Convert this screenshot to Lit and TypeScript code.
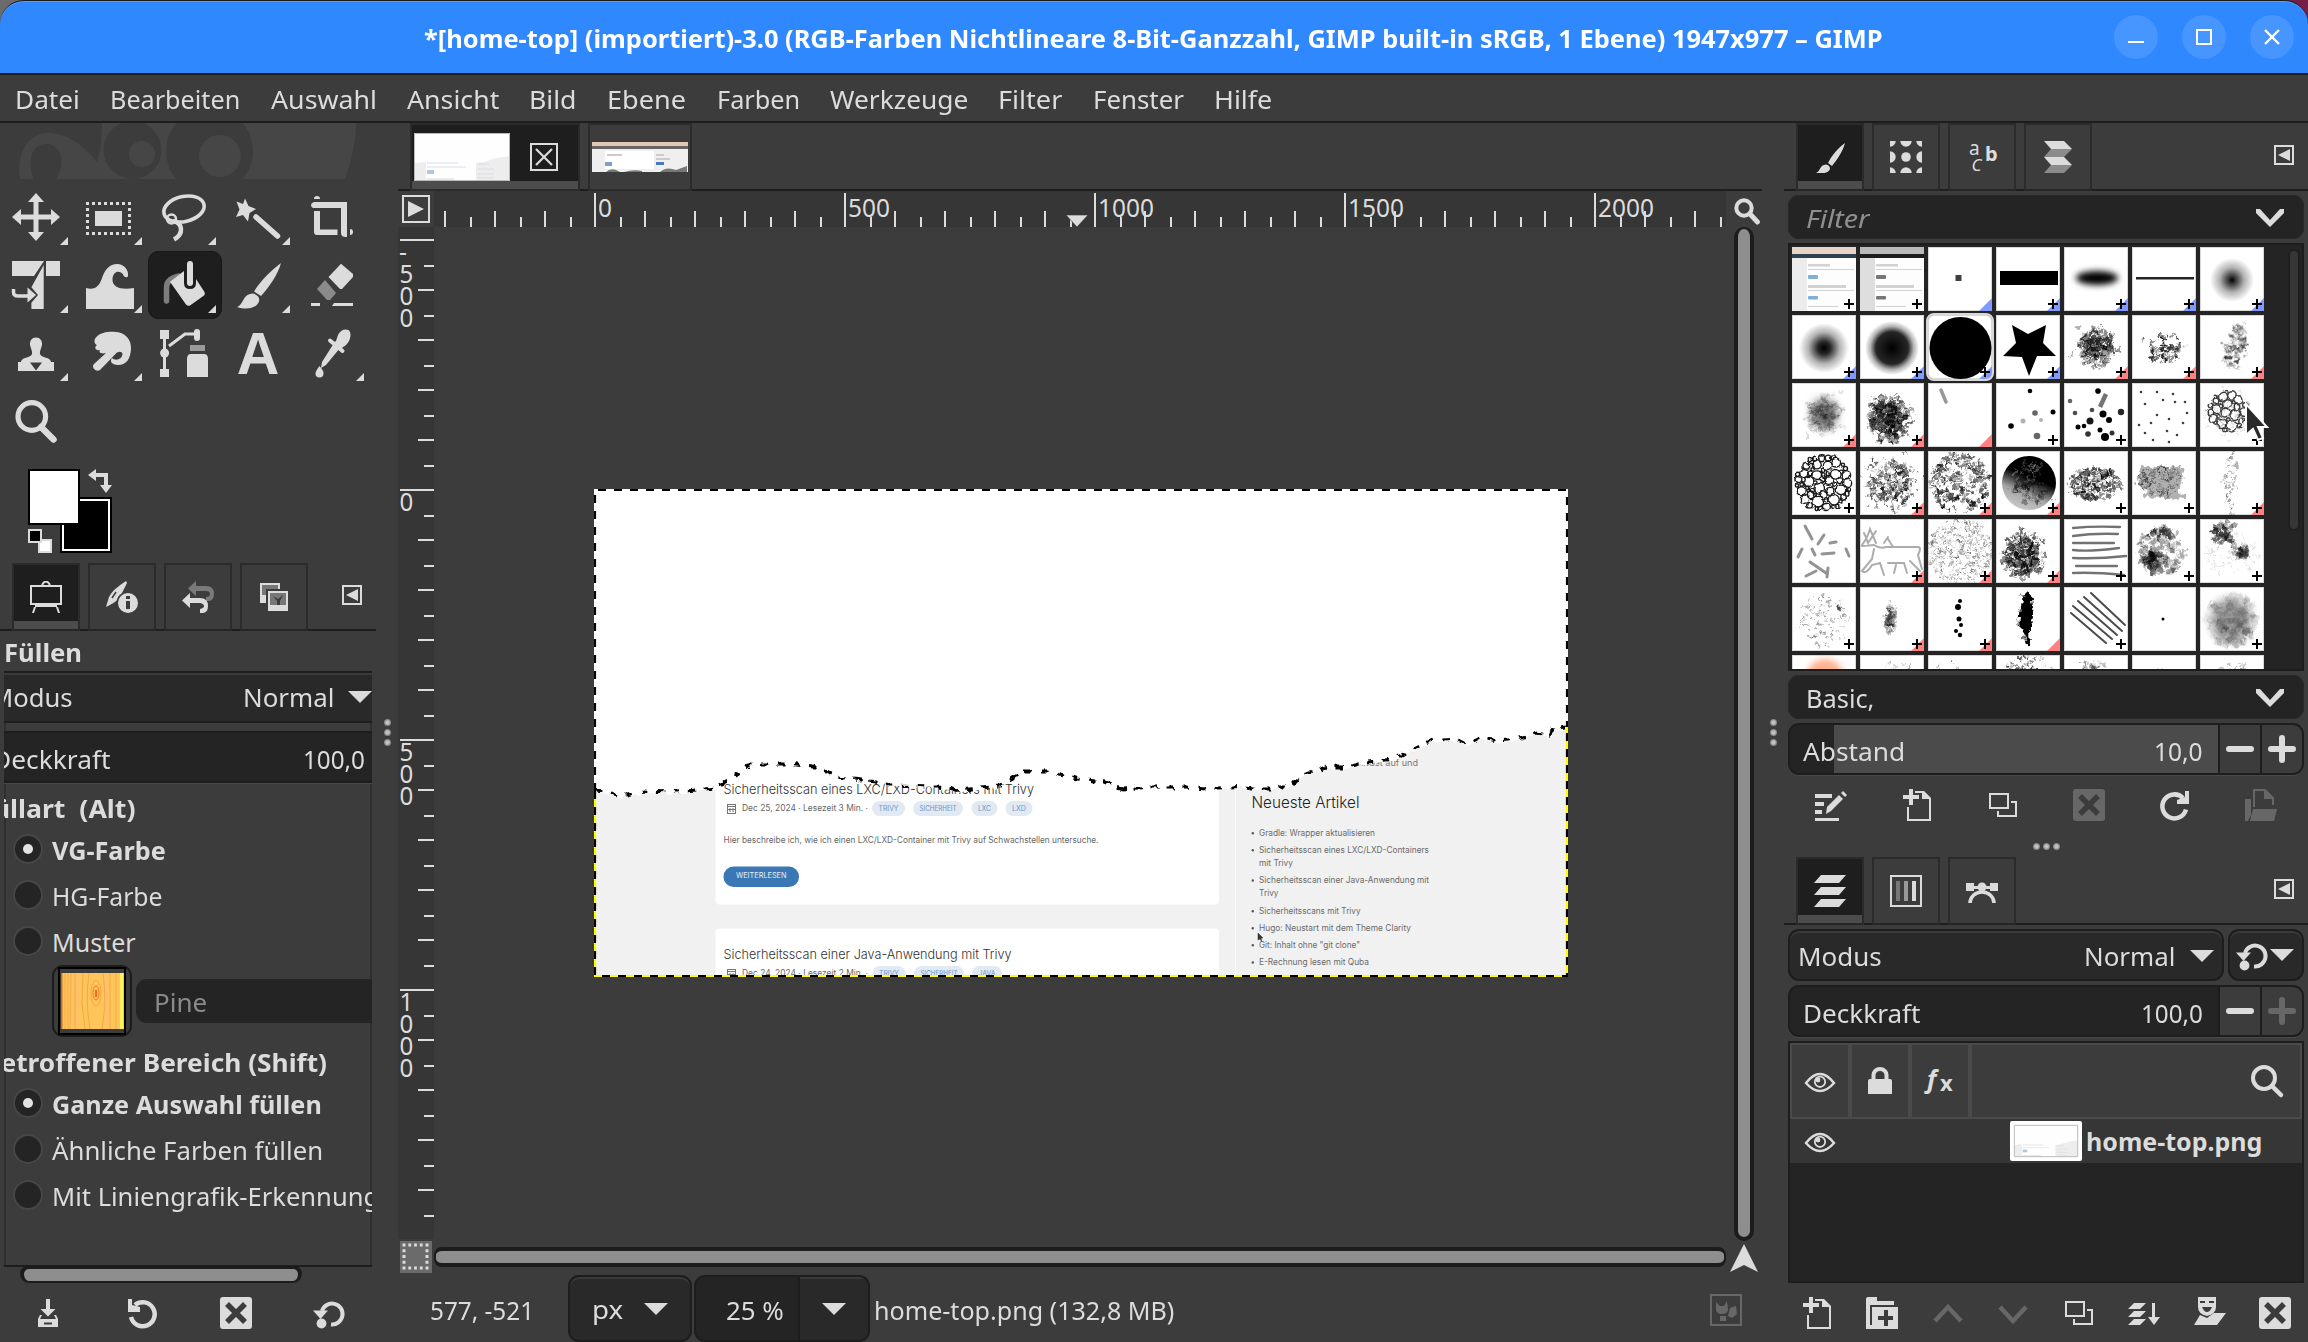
import { LitElement, html, css, svg, nothing } from "lit";
import { customElement, property } from "lit/decorators.js";
import { classMap } from "lit/directives/class-map.js";
import { styleMap } from "lit/directives/style-map.js";

const L = "#dcdcdc";

/* Text squeezed or stretched to a known advance width. */
@customElement("fit-text")
class FitText extends LitElement {
  @property() text = "";
  @property({ type: Number }) w = 0;
  static styles = css`
    :host { display: inline-block; white-space: pre; flex: none; }
    .box { display: block; }
    .in { display: inline-block; transform-origin: 0 50%; white-space: pre; }
  `;
  render() {
    return html`<span class="box" style=${styleMap({ width: this.w + "px" })}><span class="in">${this.text}</span></span>`;
  }
  updated() {
    const el = this.renderRoot.querySelector(".in") as HTMLElement;
    const n = el.offsetWidth;
    if (n > 0) el.style.transform = `scaleX(${this.w / n})`;
  }
}

const T = (text: string, w: number, cls = "") => html`<fit-text class=${cls} .text=${text} .w=${w}></fit-text>`;

const ic = (w: number, h: number, body: unknown, cls = "") =>
  html`<svg class="ic ${cls}" width=${w} height=${h} viewBox="0 0 ${w} ${h}" fill=${L}>${body}</svg>`;

/* ---------- toolbox ---------- */
const tools: { body: unknown; more?: boolean; on?: boolean }[] = [
  { more: true, body: svg`<path d="M24 0L32 9H26.5V21.5H39V16L48 24L39 32V26.5H26.5V39H32L24 48L16 39H21.5V26.5H9V32L0 24L9 16V21.5H21.5V9H16Z"/>` },
  { more: true, body: svg`<rect x="1.5" y="10.5" width="42" height="30" fill="none" stroke=${L} stroke-width="3" stroke-dasharray="3 3" stroke-dashoffset="1.5"/><rect x="9" y="18" width="27" height="15"/>` },
  { more: true, body: svg`<g fill="none" stroke=${L} stroke-width="3.600"><ellipse cx="24" cy="16" rx="20.5" ry="12.5" transform="rotate(-13 24 16)"/><circle cx="11.5" cy="26" r="4.5" stroke-width="2.500"/><path d="M13 28C23 30 24 41 14 46.500" stroke-width="4.5"/></g>` },
  { more: true, body: svg`<path d="M11 5.500L14.500 13L22 16L15.500 20L14 28.500L9 22L2 24L5.500 16.500L2.500 8.500L9 11Z"/><path d="M22 24L43.500 43" stroke=${L} stroke-width="5.5" stroke-linecap="round"/>` },
  { body: svg`<path d="M6 9H39V44H38Q33 44 33 40V15H5Q3 14 3 12T6 9ZM6 18H12V36.500H29.500V42H9Q6 42 6 39ZM6 6Q6 3 9 3T12 6ZM42 36Q45 36 45 39T42 42Z"/>` },
  { more: true, body: svg`<path d="M0 0H32L22 15H0ZM34 0H48V15H34ZM31.700 4V48H19.400V41.700L26 34L19.400 26.300Z"/><path d="M1.500 28V31Q1.500 35 6 35H16" fill="none" stroke=${L} stroke-width="3.5"/><path d="M15.500 26.500L24 34L15.500 41.500Z"/>` },
  { more: true, body: svg`<path d="M0 48V27C9 30 14 24 16 17C19 8 24 3 31 3C38 3 43 9 42 15.500C40 17 38 16 37 13.500C34 9 27 10 26.500 18C26 27 36 29 48 27V48Z"/>` },
  { more: true, on: true, body: svg`<path d="M6.500 40V26Q6.500 18 19 15" fill="none" stroke="#7d7d7d" stroke-width="5.5" stroke-linecap="round"/><path d="M10 20.700L24 10V22Q24 28 30 28T36 22V18L44.500 31Q45.500 33 44 34.500L30 44.500Q28 45.500 26 43.500Z"/><rect x="27" y="0" width="6" height="25" rx="3"/>` },
  { more: true, body: svg`<path d="M47 2C44 13 36 25 27 35L20 30.500C27 19 38 9 47 2ZM19 32.500C24 34 26 37 25 40.500C22 48 12 49 3 46C10 44 8 33 19 32.500Z"/>` },
  { body: svg`<path d="M33 2.700L45 13V16L34 28H32L20.500 16Z"/><path d="M17 19L28 32L22 39H19L9 28Z" fill="#8b8b8b"/><path d="M3 42H12V45H3ZM26 42H45V45H24Z"/>` },
  { more: true, body: svg`<path d="M24 8.500C28 8.500 30.500 12 30 16C29 20 27.500 22 28 25C29 29 39 28 39 33H42V42H6V33H9C9 28 19 29 20 25C20.500 22 19 20 18 16C17.500 12 20 8.500 24 8.500Z"/><path d="M18 33.500H30L24 41.500Z" fill="#3c3c3c"/>` },
  { more: true, body: svg`<path d="M9.500 9C14 3 22 2.500 28 2.700C40 3 45.500 11 45 20C44.500 29 41 36 32 36C25.500 36 23.500 32 26 29C29 32 36 31 36.500 25C36 22 32 22 29.500 25L14 41Q11 43 8 40Q6 37 8 35L20 24C16 25 12 24 14 21C9 22 8 18 11 16C8 15 8 11 9.500 9Z"/>` },
  { body: svg`<path d="M0 1H9V10H6V40H9V48H0V40H3V10H0Z"/><circle cx="4.600" cy="24" r="4.500"/><path d="M9 17L25 5H35" fill="none" stroke=${L} stroke-width="3"/><rect x="34" y="0" width="6" height="12" rx="3"/><path d="M30 16H45V22H30Z" fill="#9a9a9a"/><path d="M27 30Q27 25 31 25H44Q48 25 48 30V48H27Z"/>` },
  { body: svg`<text x="24" y="44.500" text-anchor="middle" font-family="Liberation Sans" font-weight="700" font-size="59">A</text>` },
  { more: true, body: svg`<path d="M30 6C33 0 40 -1 42 3C44 8 40 16 35 18L33 20L25 14L28 12Z"/><path d="M22 11.500L34.500 22" stroke=${L} stroke-width="4" stroke-linecap="round"/><path d="M26 14L32 19L18 36L13 39L14 33Z"/><path d="M11.500 37Q16 42 15.500 44.500A4 4 0 0 1 7.500 44.500Q7.500 42 11.500 37Z"/>` },
  { body: svg`<circle cx="19.800" cy="19.500" r="13.800" fill="none" stroke=${L} stroke-width="5.200"/><path d="M29 30L41.500 42.500" stroke=${L} stroke-width="6.500" stroke-linecap="round"/>` },
];

/* ---------- small icons ---------- */
const iEasel = svg`<rect x="1" y="5" width="30" height="18" fill="none" stroke=${L} stroke-width="2"/><path d="M12 4Q16 -3 20 4" fill="none" stroke=${L} stroke-width="2"/><path d="M5 24H27V26H5ZM4 26H6L4 32H2ZM26 26H28L30 32H28Z"/>`;
const iDevice = svg`<path d="M20 0L21 2L13 18Q8 22 2 25L0 26L3 16Q6 9 20 0Z"/><path d="M6 17L10 11" stroke="#3c3c3c" stroke-width="1.500"/><circle cx="22" cy="22" r="11.500" fill="#3c3c3c"/><circle cx="22" cy="22" r="10"/><path d="M20 15H24V18H20ZM20 20H24V28H20Z" fill="#3c3c3c"/>`;
const iHistory = svg`<path d="M6 7.500L14 0V5H24Q32 5 32 13T24 20V16Q28 16 28 13T24 10H14V15Z" fill="#7a7a7a"/><path d="M0 19.500L8 12V17H18Q26 17 26 25T18 32V28Q22 27 22 25T18 22H8V27Z"/>`;
const iImages = svg`<path d="M2 2H22V8H20V4H4V14H8V22H2Z"/><path d="M4 4H20V8H8V14H4Z" fill="#777"/><path d="M10 10H30V30H10Z"/><path d="M12 12H28V24H12Z" fill="#777"/><path d="M19 24V20L15 15L20 18L25 14L22 20V24Z" fill="#3c3c3c"/>`;
const iBrush = svg`<path d="M31 2C29 10 23 19 18 25L14 22C18 14 25 6 31 2ZM12 23.500Q16 24 16 28C14 33 7 32.500 2 32C7 30 5 24 12 23.500Z"/>`;
const iPattern = svg`<g>${[0, 16, 32].map((y) => [0, 16, 32].map((x) => svg`<circle cx=${x} cy=${y} r=${x === 16 && y === 16 ? 4.800 : 5.700}/>`))}</g>`;
const iFont = svg`<g font-family="Noto Sans"><text x="3" y="13.500" font-size="19">a</text><text x="19" y="20" font-size="20" font-weight="700">b</text><text x="5.500" y="30" font-size="17" font-style="italic">C</text></g>`;
const iDocs = svg`<path d="M2 0H22L30 8H9ZM2 16H22L30 24H9Z"/><path d="M9 8H30L22 16H2ZM9 24H30L22 32H2Z" fill="#8b8b8b"/>`;
const iLayers = svg`<path d="M7 0H32L25 8H0ZM7 12H32L25 20H0ZM7 24H32L25 32H0Z"/>`;
const iChannels = svg`<rect x="1" y="1" width="30" height="30" fill="none" stroke=${L} stroke-width="2"/><path d="M6 6H10V26H6Z" fill="#777"/><path d="M14 6H18V26H14Z" fill="#999"/><path d="M22 6H26V26H22Z"/>`;
const iPaths = svg`<path d="M0 8H8V11H24V8H32V16H24V14H8V16H0Z"/><circle cx="16" cy="12" r="4.500"/><path d="M4 28A12 11 0 0 1 28 28" fill="none" stroke=${L} stroke-width="3.500"/>`;
const iSave = svg`<path d="M14 2H18V12H23.500L16 19.500L8.500 12H14ZM8 18L6 22V30H26V22L24 18H22L24 22H8L10 18Z"/><path d="M12 25.500H20V27.500H12Z" fill="#3c3c3c"/>`;
const iRevert = svg`<path d="M5 20A12 12 0 1 0 9 8" fill="none" stroke=${L} stroke-width="4.500"/><path d="M2 2H6V8L14 10V15H2Z"/>`;
const iDelete = svg`<rect width="32" height="32" rx="3"/><path d="M7 7L25 25M25 7L7 25" stroke="#3c3c3c" stroke-width="5.500"/>`;
const iReset = svg`<path d="M8 14A10.500 10.500 0 1 1 17 27.500" fill="none" stroke=${L} stroke-width="4"/><path d="M-1 13.500H14L6.500 22Z"/><circle cx="7.500" cy="26.500" r="4.900"/>`;
const iEdit = svg`<path d="M0 5H17V9H0ZM0 13H9V17H0ZM0 21H7V25H0ZM0 29H24V32H0Z"/><path d="M11 25L12 18L24 6L28 10L16 22Z"/><path d="M26 4L28 2L32 6L30 8Z"/>`;
const iNew = svg`<path d="M6 0H10V6H16V10H10V16H6V10H0V6H6Z" transform="translate(2 0)"/><path d="M7 18V31H29V10L22 3H14" fill="none" stroke=${L} stroke-width="2"/><path d="M21 2H23L30 9V10H21Z"/>`;
const iDup = svg`<path d="M3 5H21V19H3Z" fill="none" stroke=${L} stroke-width="2"/><path d="M24 13H29V27H11V22" fill="none" stroke=${L} stroke-width="2"/>`;
const iRefresh = svg`<path d="M27 19.500A12 12 0 1 1 24 8" fill="none" stroke=${L} stroke-width="4.500" transform="translate(0 1)"/><path d="M26 2H30V15H18V11L26 8Z"/>`;
const iOpen = svg`<path d="M0 10H6V26L3 32H0Z"/><path d="M9 18V1H20L28 9V16" fill="none" stroke=${L} stroke-width="2"/><path d="M19 1L28 10H19ZM8 20H32L29 32H5Z"/>`;
const iGroup = svg`<path d="M0 2Q0 0 2 0H11V4H28V8H4V28H0Z"/><path d="M6 10H32V32H0V28H4V28H6Z"/><path d="M18 13H22V19H27V23H22V29H18V23H12V19H18Z" fill="#3c3c3c"/>`;
const iUp = svg`<path d="M3 24L16 10L29 24" fill="none" stroke=${L} stroke-width="4.500"/>`;
const iDown = svg`<path d="M3 10L16 24L29 10" fill="none" stroke=${L} stroke-width="4.500"/>`;
const iMerge = svg`<path d="M6 6H18L12 12H0ZM6 14H18L12 20H0ZM6 22H18L12 28H0ZM24 6H27V20H32L26 28L20 20H24Z"/>`;
const iMask = svg`<path d="M4 0H22V10Q22 17 13 19Q4 17 4 10Z"/><path d="M6 4H11V6H6ZM15 4H20V6H15ZM8 10H18Q16 15 13 15T8 10Z" fill="#3c3c3c"/><path d="M6 18L13 21L20 16H32L23 28H0Z"/>`;
const iEye = svg`<path d="M1 11Q15 -7 29 11Q15 27 1 11Z" fill="none" stroke=${L} stroke-width="2.500"/><circle cx="15" cy="9.800" r="5.200" fill="none" stroke=${L} stroke-width="1.800"/><circle cx="13" cy="8" r="2.400"/>`;
const iLock = svg`<path d="M0 13Q0 11 2 11H22Q24 11 24 13V26H0Z"/><path d="M5.500 13V7A6.500 6 0 0 1 18.500 7V13" fill="none" stroke=${L} stroke-width="4"/>`;
const iSearch = svg`<circle cx="13" cy="13" r="11" fill="none" stroke=${L} stroke-width="4"/><path d="M21 21L30 30" stroke=${L} stroke-width="4.500" stroke-linecap="round"/>`;
const iMenu = svg`<rect x="1" y="1" width="18" height="18" fill="none" stroke=${L} stroke-width="2"/><path d="M16 4V16L4 10Z"/>`;
const tri = ic(24, 12, svg`<path d="M0 0H24L12 12Z"/>`);
const chev = ic(28, 18, svg`<path d="M0 0H4L14 11L24 0H28V4L14 18L0 4Z"/>`);

/* ---------- brush previews ---------- */
const rng = (s: number) => () => {
  s = (s * 1664525 + 1013904223) >>> 0;
  return s / 4294967296;
};
const f1 = (n: number) => n.toFixed(1);
const f2 = (n: number) => n.toFixed(2);

function splat(seed: number, n: number, cx: number, cy: number, rx: number, ry: number, r0: number, r1: number, op: number, even = false) {
  const r = rng(seed * 7919 + 13);
  r();
  const out: unknown[] = [];
  for (let i = 0; i < n; i++) {
    const a = r() * Math.PI * 2;
    const d = even ? Math.sqrt(r()) : (r() + r()) / 2 + (r() < 0.12 ? r() * 0.4 : 0);
    const s = r0 + r() * (r1 - r0);
    out.push(svg`<circle cx=${f1(cx + Math.cos(a) * d * rx)} cy=${f1(cy + Math.sin(a) * d * ry)} r=${f1(s)} opacity=${f2(op * (0.4 + r() * 0.6))}/>`);
  }
  return svg`<g filter="url(#rough)">${out}</g>`;
}

function rings(seed: number, n: number, cx: number, cy: number, R: number, op: number) {
  const r = rng(seed * 331 + 5);
  r();
  const pts: number[][] = [];
  for (let k = 0; k < 4000 && pts.length < n; k++) {
    const s = k < 400 ? 4 + r() * 1.5 : k < 1500 ? 2.8 + r() : 1.6 + r();
    const a = r() * 6.283, d = Math.sqrt(r()) * (R - s);
    const x = cx + Math.cos(a) * d, y = cy + Math.sin(a) * d;
    if (pts.every((p) => Math.hypot(p[0] - x, p[1] - y) > p[2] + s - 0.3)) pts.push([x, y, s]);
  }
  return svg`<g filter="url(#wobble)" fill="none" stroke="#000" stroke-width="1.400" opacity=${op}>${pts.map((p) => svg`<circle cx=${f1(p[0])} cy=${f1(p[1])} r=${f1(p[2])}/>`)}</g>`;
}

const lines = (d: string, w: number, op: number) => svg`<path class="soft" d=${d} fill="none" stroke="#000" stroke-width=${w} opacity=${op} stroke-linecap="round"/>`;
const glow = (id: string, r: number, core: number) => svg`<radialGradient id=${id}><stop offset="0"/><stop offset=${core} stop-opacity=".85"/><stop offset=${(1 + core) / 2} stop-opacity=".3"/><stop offset="1" stop-opacity="0"/></radialGradient><circle cx="32" cy="33" r=${r} fill="url(#${id})"/>`;
const pageShot = (top: string, bar: string, side: string, btn: string) => svg`<rect width="64" height="64" fill="#f4f4f4"/><rect width="64" height="7" fill=${top}/><rect y="7" width="64" height="4" fill=${bar}/><rect y="11" width="15" height="53" fill=${side}/><rect x="15" y="11" width="49" height="53" fill="#fdfdfd"/><g class="soft" fill="#d2d2d2"><rect x="16" y="17" width="22" height="2.500"/><rect x="16" y="22" width="46" height="1"/><rect x="16" y="38" width="38" height="3"/><rect x="16" y="43" width="46" height="1"/><rect x="16" y="59" width="30" height="1"/></g><g class="soft" fill=${btn}><rect x="16" y="28" width="10" height="4" rx="1"/><rect x="16" y="49" width="10" height="3.500" rx="1"/></g>`;

type Brush = [unknown, string, boolean?];
const brushes: Brush[] = [
  [pageShot("#e9d3c9", "#2d4354", "#ececec", "#7fb0da"), "+"],
  [pageShot("#b9b9b9", "#1d1d1d", "#dedede", "#777"), "+"],
  [svg`<rect class="soft" x="27.500" y="28" width="6" height="6" opacity=".75"/>`, "b"],
  [svg`<rect class="soft" x="4" y="24" width="58" height="14"/>`, "b+"],
  [svg`<ellipse class="soft3" cx="33" cy="31" rx="21" ry="7"/>`, "b+"],
  [svg`<rect class="soft" x="4" y="30" width="58" height="2.500" opacity=".85"/>`, "b+"],
  [glow("g1", 22, 0.12), "b+"],
  [glow("g2", 25, 0.25), "b+"],
  [glow("g3", 27, 0.6), "b+"],
  [svg`<circle cx="32.500" cy="33" r="31"/>`, "b+", true],
  [svg`<path class="soft" d="M16 10L32 19L50 10L47 28L60 41L41 41L33 61L26 42L7 41L20 28Z"/>`, "b+"],
  [splat(11, 260, 33, 32, 21, 23, 1, 2.500, 0.5), "r+"],
  [splat(12, 90, 33, 34, 23, 18, 1, 2.200, 0.65), "r+"],
  [svg`<g transform="rotate(14 34 32)">${splat(13, 120, 35, 31, 13, 27, 0.900, 2.200, 0.45)}</g>`, "r+"],
  [svg`${splat(14, 200, 32, 32, 22, 23, 1, 2.800, 0.16)}<ellipse class="soft5" cx="32" cy="31" rx="13" ry="15" opacity=".55"/>`, "r+"],
  [splat(15, 330, 29, 35, 24, 26, 1, 2.700, 0.6), "r+"],
  [lines("M13 7L18 19", 3.500, 0.4), "r"],
  [svg`<g class="soft"><circle cx="34" cy="8" r="2.300"/><circle cx="57" cy="29" r="2.500"/><circle cx="15" cy="43" r="2.800"/><circle cx="39" cy="30" r="2.800" opacity=".6"/><circle cx="27" cy="38" r="2.500" opacity=".3"/><circle cx="41" cy="53" r="3.300" opacity=".6"/><circle cx="45" cy="37" r="2" opacity=".3"/></g>`, "+"],
  [svg`<g class="soft"><circle cx="34" cy="8" r="2.800"/><path d="M42 11L36 24" stroke="#000" stroke-width="4.500" opacity=".55"/><circle cx="6" cy="18" r="2.300" opacity=".6"/><circle cx="11" cy="30" r="2.300" opacity=".7"/><circle cx="39" cy="31" r="3.500"/><circle cx="57" cy="29" r="3.200" opacity=".85"/><circle cx="28" cy="27" r="2.300" opacity=".7"/><circle cx="45" cy="37" r="3"/><circle cx="26" cy="38" r="3.500" opacity=".9"/><circle cx="14" cy="44" r="2.500"/><circle cx="20" cy="43" r="2.300"/><circle cx="36" cy="47" r="2.500"/><circle cx="24" cy="51" r="2.800" opacity=".8"/><circle cx="41" cy="54" r="4"/><circle cx="48" cy="50" r="2.500" opacity=".8"/></g>`, "+"],
  [svg`<g class="soft3s">${[[9, 9], [25, 9], [41, 11], [31, 17], [13, 21], [43, 19], [53, 19], [25, 32], [37, 36], [7, 42], [19, 40], [51, 40], [55, 30], [35, 48], [45, 52], [13, 50], [21, 57], [37, 59]].map((p) => svg`<circle cx=${p[0]} cy=${p[1]} r="1.300" opacity=".75"/>`)}</g>`, ""],
  [svg`${rings(20, 60, 28, 28, 21, 0.75)}${splat(20, 80, 28, 30, 27, 28, 1, 2, 0.16)}`, "+"],
  [rings(21, 150, 31, 32, 29, 0.9), "+"],
  [splat(22, 280, 31, 32, 30, 29, 1, 2, 0.55), "r+"],
  [splat(23, 270, 32, 32, 30, 30, 1, 2.200, 0.6, true), "r+"],
  [svg`<linearGradient id="mn" x1="0.700" y1="0" x2="0.300" y2="1"><stop offset=".4"/><stop offset=".7" stop-opacity=".35"/><stop offset="1" stop-opacity=".2"/></linearGradient><circle class="soft" cx="33" cy="32" r="27" fill="url(#mn)"/><g fill="#fff">${splat(24, 40, 32, 20, 18, 12, 1, 1.800, 0.3)}</g>${splat(25, 110, 36, 36, 22, 20, 1, 2.500, 0.4)}`, "r+"],
  [splat(26, 250, 32, 33, 27, 16, 1, 2.200, 0.6, true), "+"],
  [svg`<path filter="url(#rough)" d="M8 16L50 15L51 24L48 33L46 42L54 44V48L10 46L16 41L4 31L8 24Z" opacity=".3"/>${splat(27, 170, 29, 30, 23, 15, 0.800, 1.500, 0.4, true)}`, "+"],
  [splat(28, 46, 31, 32, 8, 31, 0.700, 1.500, 0.4, true), "r+"],
  [lines("M13 7L20 20M32 16L26 25M38 24L44 23M10 30L6 38M20 30L23 36M30 35L42 34M54 30L57 37M18 43L34 54M14 57L24 52M36 49L35 58", 3, 0.42), ""],
  [lines("M2 26Q8 18 10 10L16 24M16 12L8 24Q6 18 4 14M2 27L14 26Q20 30 26 28H58Q62 28 58 36L62 50M14 30L12 40L2 52Q6 56 12 46L20 44L24 56M28 44H44L47 54M50 42L60 52M28 20L33 28M24 24L28 18M34 54L36 46", 2, 0.32), "r+"],
  [splat(31, 460, 32, 32, 33, 33, 0.600, 1.300, 0.36, true), "r+"],
  [splat(32, 310, 28, 36, 23, 26, 1, 2.600, 0.55), "r+"],
  [lines("M9 9Q30 7 56 8M9 17Q30 14 54 15M9 24H50M9 31Q24 33 55 29M9 39Q34 40 62 37M12 47H53M9 54Q30 53 60 56", 2.300, 0.55), "+"],
  [svg`${splat(34, 110, 30, 32, 23, 25, 2, 3.200, 0.28, true)}${splat(341, 60, 18, 42, 10, 14, 2, 3, 0.4)}${splat(342, 50, 30, 14, 14, 8, 1.500, 3, 0.3)}`, "+"],
  [svg`${splat(35, 80, 23, 14, 14, 13, 1.500, 3, 0.4)}${splat(352, 50, 41, 33, 9, 9, 1.500, 3, 0.3)}${splat(351, 70, 32, 36, 28, 24, 0.800, 1.500, 0.14, true)}`, "+"],
  [splat(36, 80, 32, 32, 26, 27, 0.800, 1.700, 0.4, true), "+"],
  [splat(37, 70, 30, 31, 7, 19, 1.500, 2.500, 0.3), "r+"],
  [svg`<g class="soft"><circle cx="32" cy="14" r="2"/><circle cx="30" cy="20" r="3"/><circle cx="31" cy="32" r="2.500"/><circle cx="33" cy="38" r="2"/><circle cx="28" cy="44" r="2"/><circle cx="32" cy="48" r="2.200"/></g>`, "r+"],
  [svg`<path filter="url(#rough)" d="M31 4Q38 10 37 26T33 44L34 58H31L29 48Q23 40 24 26T31 4Z"/>${splat(39, 60, 30, 30, 8, 24, 1, 2.200, 0.7)}`, "r"],
  [lines("M27 6L61 38M20 10L58 44M14 14L53 48M9 19L48 52M7 26L42 56", 2, 0.7), "+"],
  [svg`<circle cx="31" cy="32" r="1.500"/>`, ""],
  [svg`<ellipse class="soft5" cx="31" cy="33" rx="20" ry="22" opacity=".4"/>${splat(42, 110, 31, 33, 25, 26, 2, 4.500, 0.12, true)}`, "+"],
  [svg`<circle class="soft3" cx="33" cy="23" r="19" fill="#ffb290"/>`, ""],
  [splat(44, 8, 32, 18, 24, 12, 1, 2, 0.3, true), ""],
  [splat(45, 12, 26, 18, 20, 12, 1, 2, 0.6, true), ""],
  [splat(46, 260, 32, 30, 30, 30, 0.800, 1.500, 0.5, true), ""],
  [splat(47, 150, 30, 24, 26, 20, 1, 2.500, 0.3), ""],
  [splat(48, 5, 32, 16, 10, 8, 1, 1.500, 0.3), ""],
  [splat(49, 50, 34, 18, 18, 12, 1, 2, 0.3), ""],
];

/* ---------- canvas ---------- */
const edge = "0,302 12,303 28,307 49,302 83,303 121,299 140,288 156,275 192,275 228,279 243,288 276,292 297,296 344,297 365,301 407,297 428,283 453,283 483,290 512,293 529,300 558,298 592,298 613,300 636,298 649,297 658,300 676,300 686,297 696,297 708,285 733,278 753,278 773,273 799,270 816,262 836,252 863,250 873,255 886,248 903,252 923,250 943,244 956,246 959,239 973,238";

const ct = (s: string, x: number, y: number, w: number, size: number, fill: string, weight = 300) =>
  svg`<text x=${x - 594} y=${y - 489} textLength=${w} lengthAdjust="spacingAndGlyphs" font-size=${size} font-weight=${weight} fill=${fill}>${s}</text>`;
const pill = (s: string, x: number, y: number, w: number) =>
  svg`<rect x=${x - 594} y=${y - 489} width=${w} height="15" rx="7.500" fill="#e1e9f3"/>${ct(s, x + 6.500, y + 10, w - 13, 7.200, "#6f95c8", 400)}`;
const cal = (x: number, y: number) => svg`<g transform="translate(${x - 594} ${y - 489})" fill="none" stroke="#777"><rect x=".5" y="1.500" width="8" height="9"/><path d="M.5 3.500H8.500M3 5V9M6 5V9M1 6.500H8"/></g>`;

const list: [string, number, number, boolean][] = [
  ["Gradle: Wrapper aktualisieren", 835.7, 116, true],
  ["Sicherheitsscan eines LXC/LXD-Containers", 852.7, 170, true],
  ["mit Trivy", 865.7, 34, false],
  ["Sicherheitsscan einer Java-Anwendung mit", 883, 170, true],
  ["Trivy", 896, 19.5, false],
  ["Sicherheitsscans mit Trivy", 913.7, 101.5, true],
  ["Hugo: Neustart mit dem Theme Clarity", 930.7, 152, true],
  ["Git: Inhalt ohne \"git clone\"", 947.7, 101, true],
  ["E-Rechnung lesen mit Quba", 965, 110, true],
];

const canvasArt = html`<svg class="art" width="974" height="488" viewBox="0 0 974 488" font-family="Inter, sans-serif">
  <rect x="1" y="1" width="972" height="486" fill="#f1f1f1"/>
  <rect x="121.500" y="240" width="503.500" height="175.500" rx="4" fill="#fff"/>
  <rect x="121.500" y="439.500" width="503.500" height="60" rx="4" fill="#fff"/>
  <path d="M641.500 290V487" stroke="#fbfbfb"/>
  ${ct("Sicherheitsscan eines LXC/LXD-Containers mit Trivy", 723.5, 793.8, 310.5, 13.4, "#333")}
  ${cal(727, 803)}${ct("Dec 25, 2024  · Lesezeit 3 Min. ·", 742, 811.3, 126, 8.6, "#666", 400)}
  ${pill("TRIVY", 872, 801, 33)}${pill("SICHERHEIT", 913, 801, 50)}${pill("LXC", 971.5, 801, 26)}${pill("LXD", 1005.5, 801, 27)}
  ${ct("Hier beschreibe ich, wie ich einen LXC/LXD-Container mit Trivy auf Schwachstellen untersuche.", 723.5, 843.3, 375, 8.6, "#666", 400)}
  <rect x="129.500" y="377.500" width="75.500" height="20.500" rx="10" fill="#3a78b5"/>
  ${ct("WEITERLESEN", 736, 878, 50.500, 7.5, "#e8f0f8", 400)}
  ${ct("Sicherheitsscan einer Java-Anwendung mit Trivy", 723.5, 958.8, 288, 13.4, "#333")}
  ${cal(727, 968)}${ct("Dec 24, 2024  · Lesezeit 2 Min.  ·", 742, 976, 126, 8.6, "#666", 400)}
  ${pill("TRIVY", 872.5, 966, 33)}${pill("SICHERHEIT", 914, 966, 50)}${pill("JAVA", 972, 966, 30)}
  ${ct("findet auf und", 1358, 765.7, 60, 8.6, "#777", 400)}
  ${ct("Neueste Artikel", 1251.5, 808, 108, 15.2, "#222")}
  ${list.map(([s, y, w, b]) => svg`${ct(s, 1259, y, w, 8.6, "#6a6a6a", 400)}${b ? svg`<circle cx="658.800" cy=${y - 489 - 2.5} r="1.200" fill="#555"/>` : nothing}`)}
  <path d="M664 444V451L666 450L668 453L667 449H669Z" fill="#333" stroke="#444" stroke-width=".6"/>
  <polygon points="1,1 973,1 973,238 ${edge.split(" ").reverse().join(" ")}" fill="#fff"/>
  <g fill="none" stroke-width="2.200">
    <g filter="url(#jag)">
      <polyline points=${edge} stroke="#fff" stroke-width="3.400"/>
      <polyline points=${edge} stroke="#000" stroke-width="3" stroke-dasharray="7.500 8.500"/>
    </g>
    <path d="M1 302V1H973V238" stroke="#fff"/><path d="M1 302V1H973V238" stroke="#000" stroke-dasharray="8 8"/>
    <path d="M1 302V487H973V238" stroke="#ff0"/><path d="M1 302V487H973V238" stroke="#000" stroke-dasharray="8 8"/>
  </g>
</svg>`;

/* ---------- rulers ---------- */
function hRuler() {
  const out: unknown[] = [];
  for (let u = -3; u <= 22; u++) {
    const x = 160 + u * 50;
    const big = ((u % 5) + 5) % 5 === 0;
    if (x > 0) out.push(svg`<rect x=${x} y=${big ? 2 : 20} width="2" height=${big ? 34 : 16}/>`);
    if (x + 26 < 1292) out.push(svg`<rect x=${x + 26} y="26" width="2" height="10"/>`);
    if (big && u >= 0) {
      const s = String(u * 100);
      out.push(svg`<text x=${x + 4} y="26" font-size="25" textLength=${s.length * 14} lengthAdjust="spacingAndGlyphs">${s}</text>`);
    }
  }
  return html`<svg class="hr" width="1292" height="36" viewBox="0 0 1292 36" fill=${L}>${out}<path d="M632 24H654L643 36Z" stroke="#363636" stroke-width=".6"/></svg>`;
}
function vRuler() {
  const out: unknown[] = [];
  for (let u = -5; u <= 14; u++) {
    const y = 262 + u * 50;
    const big = ((u % 5) + 5) % 5 === 0;
    const t = u === -5 ? 12 : y;
    out.push(svg`<rect x=${big ? 2 : 20} y=${t} width=${big ? 34 : 16} height="2"/>`);
    out.push(svg`<rect x="26" y=${t + 26} width="10" height="2"/>`);
    if (big) [...String(u * 100)].forEach((c, i) => out.push(svg`<text x=${c === "-" ? 1 : 1.5} y=${t + 21.5 + i * 22} font-size="25" textLength=${c === "-" ? 8 : 13.8} lengthAdjust="spacingAndGlyphs">${c}</text>`));
  }
  return html`<svg class="vr" width="36" height="1012" viewBox="0 0 36 1012" fill=${L}>${out}</svg>`;
}

const thumb = (w: number, h: number) => html`<svg class="ic" width=${w} height=${h} viewBox="0 0 96 48" preserveAspectRatio="none"><rect width="96" height="48" fill="#fefefe"/><g class="soft"><path d="M1 30L12 29V47H1ZM62 30L70 29L82 25L95 23V47H62Z" fill="#ededee"/><path d="M13 30H44M13 34H52" stroke="#eceef1" stroke-width="2"/><rect x="13" y="37" width="7" height="4" fill="#afc6e4"/><path d="M13 46H40M64 31H75M64 36H80M64 41H80M64 45H80" stroke="#dfe2e6" stroke-width="1.500"/></g><rect x=".5" y=".5" width="95" height="47" fill="none" stroke="#bbb" vector-effect="non-scaling-stroke"/></svg>`;
const thumb2 = html`<svg class="ic" width="96" height="30" viewBox="0 0 96 30"><rect width="96" height="30" fill="#efefef"/><rect width="96" height="4" fill="#e4c6b6"/><rect y="4" width="96" height="3" fill="#666"/><rect x="13" y="9" width="49" height="18" fill="#fff"/><g class="soft"><path d="M15 13H30M64 13H72M64 17H78" stroke="#ccc" stroke-width="2"/><rect x="13" y="20" width="7" height="4" fill="#7d9fd0"/><rect x="64" y="20" width="8" height="3" fill="#4a79bb"/><path d="M14 30Q18 26 24 28L28 30ZM32 30Q42 27 50 29V30ZM68 30Q74 24 84 28L95 24V30Z" fill="#777"/></g></svg>`;

@customElement("app-root")
class AppRoot extends LitElement {
  static styles = css`
    :host { display: block; width: 2308px; height: 1342px; overflow: hidden; background: linear-gradient(90deg, #6b6b6b 0 50%, #741f44 50%); font: 25px "Noto Sans", sans-serif; line-height: 38px; color: #dcdcdc; }
    * { box-sizing: border-box; }
    .ic { display: block; flex: none; overflow: visible; }
    .clip { overflow: hidden; }
    .dim { opacity: .27; }
    .soft { filter: blur(.7px); }
    .soft3s { filter: blur(.5px); }
    .soft3 { filter: blur(3px); }
    .soft5 { filter: blur(5px); }
    .b { font-weight: 700; }
    .defs { position: absolute; width: 0; height: 0; }
    .win { display: grid; grid-template-rows: 75px 48px 1219px; grid-template-columns: 398px 1364px 546px; height: 1342px; }
    .title { grid-column: 1 / 4; display: grid; grid-template-columns: 424px 1fr 194px; align-items: center; background: #3088ff; border: solid #1b1b1b; border-width: 1px 0 2px; border-radius: 24px 24px 0 0; color: #fff; font-weight: 700; box-shadow: inset 0 1px #57a0ff; }
    .title > fit-text { padding-top: 1px; }
    .ctl { display: flex; gap: 24px; }
    .ctl span { width: 44px; height: 44px; border-radius: 50%; background: #4795ff; display: grid; place-items: center; }
    .menu { grid-column: 1 / 4; display: flex; align-items: center; padding: 2px 0 0 15px; gap: 30.300px; background: #3c3c3c; border-bottom: 2px solid #1d1d1d; }
    .side { display: flex; background: #3c3c3c; min-width: 0; }
    .grip { width: 22px; display: flex; flex-direction: column; align-items: center; justify-content: center; gap: 3px; }
    .grip.h { width: auto; height: 22px; flex-direction: row; gap: 3px; }
    .grip i { width: 7px; height: 7px; border-radius: 50%; background: radial-gradient(#c4c4c4 25%, #777 75%); }
    .lcol { width: 376px; overflow: hidden; display: flex; flex-direction: column; }
    .tools { display: grid; grid-template-columns: repeat(5, 74px); grid-auto-rows: 68px; }
    .tool { display: flex; padding: 10px 0 0 12px; border-radius: 11px; }
    .tool.on { background: #1e1e1e; box-shadow: inset 0 0 0 1px #191919; }
    .more { width: 8px; height: 8px; background: #dcdcdc; clip-path: polygon(100% 0, 100% 100%, 0 100%); margin-top: 44px; flex: none; }
    .tabs { display: flex; gap: 8px; height: 68px; padding-left: 12px; background: linear-gradient(#1d1d1d, #1d1d1d) 0 100% / 100% 2px no-repeat; }
    .tab { width: 68px; height: 68px; border: 2px solid #2b2b2b; border-bottom-color: #262626; background: #3c3c3c; display: grid; place-items: center; }
    .tab.on { background: linear-gradient(#4c4c4c, #4c4c4c) 0 100% / 100% 8px no-repeat #1e1e1e; }
    .tabs .mb { margin: 22px 14px 0 auto; }
    .h1 { height: 40px; padding: 2px 0 0 4px; font-weight: 700; }
    .frame { margin-left: 4px; width: 368px; height: 596px; overflow: hidden; border-bottom: 2px solid #1d1d1d; box-shadow: inset 2px 0 #2e2e2e, inset -2px 0 #2e2e2e; }
    .row { display: flex; align-items: center; height: 52px; }
    .combo { background: #292929; border: solid #1d1d1d; border-width: 2px 0; box-shadow: inset 0 2px #3a3a3a; }
    .spin { background: #242424; border: solid #1d1d1d; border-width: 2px 0; box-shadow: 0 1px #484848; padding-top: 3px; }
    .sp { margin-left: auto; }
    .hd { height: 43px; padding-top: 6px; font-weight: 700; }
    .rad { display: flex; align-items: center; height: 46px; padding-left: 9px; gap: 9px; }
    .rad > fit-text { padding-top: 1px; }
    .dot { width: 30px; height: 30px; border-radius: 50%; background: #242424; border: 2px solid #474747; display: grid; place-items: center; flex: none; }
    .dot.on::after { content: ""; width: 10px; height: 10px; border-radius: 50%; background: #e2e2e2; }
    .pat { display: flex; height: 73px; padding: 1px 0 0 48px; gap: 4px; align-items: center; }
    .wood { width: 80px; height: 72px; border: 2px solid #1c1c1c; border-radius: 11px; flex: none; display: grid; place-items: center; }
    .woodin { width: 68px; height: 68px; border: 2px solid #000; display: grid; place-items: center; }
    .pine { flex: none; width: 260px; height: 44px; padding: 4px 0 0 18px; background: #242424; border-radius: 11px; color: #8a8a8a; }
    .hs { height: 18px; width: 282px; margin: -2px 0 0 20px; background: #8e8e8e; border: 4px solid #1c1c1c; border-bottom-width: 2px; border-radius: 9px; flex: none; }
    .bot { display: flex; height: 59px; align-items: center; }
    .bot > * { flex: 1 1 0; display: grid; place-items: center; }
    .lbot { width: 376px; margin-left: 1px; }
    .mid { display: grid; grid-template-columns: 36px 1292px 36px; grid-template-rows: 68px 36px 1012px 36px 67px; background: #3c3c3c; }
    .itabs { grid-column: 1 / 4; display: flex; gap: 8px; padding-left: 12px; background: linear-gradient(#1d1d1d, #1d1d1d) 0 100% / 100% 2px no-repeat; }
    .it { height: 68px; border: 2px solid #2b2b2b; background: #3c3c3c; display: flex; align-items: center; padding: 0 2px; gap: 20px; }
    .it.on { width: 170px; background: linear-gradient(#4c4c4c, #4c4c4c) 0 100% / 100% 8px no-repeat #1e1e1e; }
    .hr, .vr { display: block; background: #363636; }
    .c { display: grid; place-items: center; }
    .zi { padding: 4px 0 0 5px; }
    .view { padding: 262px 0 0 160px; }
    .art { display: block; }
    .vs { width: 20px; height: 1014px; margin-left: 8px; border: 4px solid #1c1c1c; border-top-width: 2px; border-radius: 10px; background: #8e8e8e; }
    .hs2 { height: 20px; margin-top: 8px; border: 4px solid #1c1c1c; border-width: 4px 2px; border-radius: 8px; background: #8e8e8e; }
    .status { grid-column: 1 / 4; display: flex; align-items: stretch; padding-left: 32px; }
    .status > fit-text { align-self: center; padding-top: 2px; }
    .px { margin-left: 34px; width: 124px; display: flex; align-items: center; background: #292929; border: 2px solid #1d1d1d; border-radius: 11px; padding: 0 22px; justify-content: space-between; box-shadow: inset 0 2px #3a3a3a; }
    .zm { margin: 0 4px 0 2px; width: 176px; display: flex; background: #242424; border: 2px solid #1d1d1d; border-radius: 11px; overflow: hidden; }
    .zt { width: 102px; display: flex; align-items: center; padding: 2px 0 0 30px; }
    .zb { flex: 1; background: #292929; border-left: 2px solid #1d1d1d; display: grid; place-items: center; box-shadow: inset 0 2px #3a3a3a; }
    .cat { margin: 19px 20px 0 auto; }
    .rcol { width: 524px; display: flex; flex-direction: column; }
    .inn { margin: 4px 4px 0; flex: none; }
    .entry { height: 44px; border-radius: 11px; background: #242424; box-shadow: inset 0 0 0 1px #292929; display: flex; align-items: center; padding: 1px 20px 0 18px; }
    .ph { font-style: italic; color: #8f8f8f; }
    .bl { height: 428px; background: #242424; border: 2px solid #1d1d1d; overflow: hidden; display: flex; padding: 2px 2px 0 2px; justify-content: space-between; }
    .bg { display: grid; grid-template-columns: repeat(7, 64px); grid-auto-rows: 64px; gap: 4px; }
    .br { display: block; background: #fff; overflow: hidden; box-shadow: inset 0 0 0 1px #d8d8d8; }
    .br.sel { outline: 2px solid #d8d8d8; border-radius: 6px; }
    .bs { width: 12px; height: 282px; margin-top: 2px; border: 2px solid #1f1f1f; border-radius: 6px; background: #363636; }
    .rs { border: 2px solid #1d1d1d; border-radius: 11px; background: #242424; height: 52px; display: flex; align-items: center; overflow: hidden; box-shadow: 0 1px #484848; }
    .fill { background: linear-gradient(90deg, #242424 44px, #4b4b4b 44px); }
    .val { width: 428px; height: 48px; display: flex; align-items: center; padding: 3px 15px 0 13px; justify-content: space-between; }
    .pm { width: 42px; height: 48px; border-left: 2px solid #1d1d1d; background: #3c3c3c; display: grid; place-items: center; flex: 1 1 0; }
    .r6 { height: 60px; margin: 0 4px; }
    .modes { display: flex; gap: 4px; height: 52px; }
    .mb1, .mb2 { border: 2px solid #1d1d1d; border-radius: 11px; background: #292929; box-shadow: inset 0 2px #3a3a3a; display: flex; align-items: center; }
    .mb1 { width: 436px; padding: 1px 8px 0 8px; }
    .mb2 { width: 76px; padding: 0 8px 0 7px; justify-content: space-between; }
    .lay { height: 242px; border: 2px solid #1d1d1d; background: #242424; }
    .lh { height: 76px; display: grid; grid-template-columns: 56px 60px 60px 1fr; background: #3c3c3c; border: 2px solid #4a4a4a; }
    .lh > * { display: grid; place-items: center; border-left: 4px solid #4a4a4a; }
    .lh > *:first-child { border-left: 0; }
    .lh > .ls { justify-items: end; padding-right: 17px; }
    .lr { height: 44px; background: #363636; display: flex; align-items: center; padding-left: 15px; font-weight: 700; }
    .th { width: 72px; height: 40px; margin: 0 4px 0 175px; border-radius: 2px; background: #fff; display: grid; place-items: center; flex: none; }
    .cursor { position: absolute; left: 2244px; top: 402px; }
  `;

  tab(body: unknown, on = false) {
    return html`<div class=${classMap({ tab: true, on })}>${ic(32, 32, body, "clip")}</div>`;
  }
  radio(text: string, w: number, on = false) {
    return html`<div class="rad"><span class=${classMap({ dot: true, on })}></span>${T(text, w, on ? "b" : "")}</div>`;
  }
  brush([art, mark, sel]: Brush) {
    const color = mark[0] === "b" ? "#8099ff" : mark[0] === "r" ? "#ff8080" : "none";
    return html`<svg class=${classMap({ br: true, sel: !!sel })} width="64" height="64" viewBox="0 0 64 64">${art}
      <path d="M64 51V64H51Z" fill=${color}/>${mark.includes("+") ? svg`<path d="M52 57H62M57 52V62" stroke="#000" stroke-width="2"/>` : nothing}</svg>`;
  }

  render() {
    const menu: [string, number][] = [["Datei", 65], ["Bearbeiten", 130], ["Auswahl", 106], ["Ansicht", 92], ["Bild", 48], ["Ebene", 79], ["Farben", 83], ["Werkzeuge", 138], ["Filter", 64], ["Fenster", 91], ["Hilfe", 58]];
    const minus = ic(28, 28, svg`<rect y="11" width="28" height="6" rx="3"/>`);
    const plus = (dim: boolean) => ic(28, 28, svg`<path d="M14 3V25M3 14H25" stroke=${L} stroke-width="6" stroke-linecap="round"/>`, dim ? "dim" : "");
    return html`<svg class="defs"><defs>
      <filter id="rough" x="-20%" y="-20%" width="140%" height="140%"><feTurbulence type="fractalNoise" baseFrequency=".22" numOctaves="2" seed="4" result="n"/><feDisplacementMap in="SourceGraphic" in2="n" scale="9" xChannelSelector="R" yChannelSelector="G"/><feGaussianBlur stdDeviation=".6"/></filter>
      <filter id="wobble" x="-20%" y="-20%" width="140%" height="140%"><feTurbulence type="fractalNoise" baseFrequency=".15" numOctaves="1" seed="9" result="n"/><feDisplacementMap in="SourceGraphic" in2="n" scale="4" xChannelSelector="R" yChannelSelector="G"/><feGaussianBlur stdDeviation=".45"/></filter>
      <filter id="jag" x="-2%" y="-10%" width="104%" height="120%"><feTurbulence type="fractalNoise" baseFrequency=".14" numOctaves="2" seed="2" result="n"/><feDisplacementMap in="SourceGraphic" in2="n" scale="7" xChannelSelector="R" yChannelSelector="G"/></filter>
    </defs></svg>
    <div class="win">
      <header class="title"><span></span>${T("*[home-top] (importiert)-3.0 (RGB-Farben Nichtlineare 8-Bit-Ganzzahl, GIMP built-in sRGB, 1 Ebene) 1947x977 – GIMP", 1458)}
        <div class="ctl"><span>${ic(16, 16, svg`<path d="M0 12H16V14H0Z" fill="#fff"/>`)}</span><span>${ic(16, 16, svg`<rect x="1" y="1" width="14" height="14" fill="none" stroke="#fff" stroke-width="2"/>`)}</span><span>${ic(16, 16, svg`<path d="M1 1L15 15M15 1L1 15" stroke="#fff" stroke-width="2.400"/>`)}</span></div>
      </header>
      <nav class="menu">${menu.map(([s, w]) => T(s, w))}</nav>

      <section class="side">
        <div class="lcol">
          <svg class="ic clip" width="376" height="60" viewBox="0 0 376 60"><path d="M20 56C16 27 30 10 48 10C70 10 88 27 97 39C101 26 102 12 102 0H356C356 22 350 42 345 56Z" fill="#464646"/><g fill="#3c3c3c"><path d="M34 56C27 42 30 21 46 21C62 21 66 42 56 56Z"/><circle cx="132.500" cy="27" r="29"/><circle cx="209.500" cy="28" r="43.500"/></g><circle cx="142" cy="31" r="13" fill="#464646"/><circle cx="219.800" cy="33" r="21" fill="#464646"/><path d="M0 56H376V60H0Z" fill="#3c3c3c"/></svg>
          <div class="tools">${tools.map((t) => html`<div class=${classMap({ tool: true, on: !!t.on })}>${ic(48, 48, t.body)}${t.more ? html`<span class="more"></span>` : nothing}</div>`)}</div>
          <svg class="ic" width="120" height="108" viewBox="0 0 120 108"><rect x="60" y="42" width="52" height="56"/><rect x="63" y="45" width="46" height="50" fill="#000" stroke="#fff" stroke-width="2"/><rect x="28" y="14" width="52" height="56"/><rect x="30" y="16" width="48" height="52" fill="#fff"/><path d="M88 20L96 14V18H108V30H112L106 38L100 30H104V22H96V26Z" fill=${L}/><rect x="39" y="85" width="12" height="12" fill="#fff" stroke=${L} stroke-width="2"/><rect x="29" y="75" width="12" height="12" stroke=${L} stroke-width="2"/></svg>
          <div class="tabs">${this.tab(iEasel, true)}${this.tab(iDevice)}${this.tab(iHistory)}${this.tab(iImages)}<span class="mb">${ic(20, 20, iMenu)}</span></div>
          <div class="h1">${T("Füllen", 78)}</div>
          <div class="frame">
            <div class="row combo"><span style=${styleMap({ marginLeft: "-14px" })}>${T("Modus", 83)}</span><span class="sp">${T("Normal", 91)}</span><span style=${styleMap({ marginLeft: "14px" })}>${tri}</span></div>
            <div class="row spin" style=${styleMap({ marginTop: "8px" })}><span style=${styleMap({ marginLeft: "-12px" })}>${T("Deckkraft", 119)}</span><span class="sp" style=${styleMap({ marginRight: "7px" })}>${T("100,0", 62)}</span></div>
            <div class="hd" style=${styleMap({ marginLeft: "-26px" })}>${T("Füllart  (Alt)", 157)}</div>
            ${this.radio("VG-Farbe", 114, true)}${this.radio("HG-Farbe", 111)}${this.radio("Muster", 84)}
            <div class="pat"><span class="wood"><span class="woodin"><svg class="ic clip" width="63" height="56" viewBox="0 0 63 56"><rect width="63" height="56" fill="#ffc45a"/><g fill="none" stroke="#f3a94a" stroke-width="1"><path d="M4 0V56M7 0V56M10 0L9 56M14 0V56M22 0L21 30L24 56M28 0Q24 28 29 56M42 0Q46 28 41 56M49 0V56M55 0V56" /><ellipse cx="35" cy="20" rx="5" ry="13"/><ellipse cx="35" cy="20" rx="3" ry="7" stroke="#f07a20"/></g><path d="M34 17H36V24H34Z" fill="#f26a10"/><path d="M16 0V56M46 0V56" stroke="#ffb88a"/><path d="M59 0H62V56H59Z" fill="#fff35a"/><path d="M0 0H1.500V56H0Z" fill="#d86a10"/></svg></span></span><span class="pine">${T("Pine", 53)}</span></div>
            <div class="hd" style=${styleMap({ marginLeft: "-21px" })}>${T("Betroffener Bereich (Shift)", 344)}</div>
            ${this.radio("Ganze Auswahl füllen", 270, true)}${this.radio("Ähnliche Farben füllen", 271)}${this.radio("Mit Liniengrafik-Erkennung", 327)}
          </div>
          <div class="hs"></div>
          <div class="bot lbot">${[iSave, iRevert, iDelete, iReset].map((i) => html`<span>${ic(32, 32, i)}</span>`)}</div>
        </div>
        <div class="grip"><i></i><i></i><i></i></div>
      </section>

      <section class="mid">
        <div class="itabs"><div class="it on">${thumb(96, 48)}${ic(28, 28, svg`<rect x="1" y="1" width="26" height="26" fill="none" stroke=${L} stroke-width="2"/><path d="M6 6L22 22M22 6L6 22" stroke=${L} stroke-width="2.200"/>`)}</div><div class="it">${thumb2}</div></div>
        <div class="c">${ic(28, 28, svg`<rect x="1" y="1" width="26" height="26" fill="none" stroke=${L} stroke-width="2"/><path d="M6 6L22 14L6 22Z"/>`)}</div>
        ${hRuler()}
        <div class="c zi">${ic(26, 26, svg`<circle cx="10" cy="10" r="7.700" fill="none" stroke=${L} stroke-width="4"/><path d="M16 16L23.500 24" stroke=${L} stroke-width="5" stroke-linecap="round"/>`)}</div>
        ${vRuler()}
        <div class="view">${canvasArt}</div>
        <div><div class="vs"></div></div>
        <div class="c">${ic(32, 32, svg`<rect width="32" height="32" fill="#6b6b6b"/><rect x="4" y="4" width="23" height="23" fill="none" stroke=${L} stroke-width="3" stroke-dasharray="2.800 2.950" stroke-dashoffset="1.400"/>`)}</div>
        <div><div class="hs2"></div></div>
        <div class="c">${ic(32, 32, svg`<path d="M16 3L30 31L16 24L2 31Z"/>`)}</div>
        <div class="status">${T("577, -521", 104)}<div class="px">${T("px", 31)}${tri}</div><div class="zm"><div class="zt">${T("25 %", 58)}</div><div class="zb">${tri}</div></div>${T("home-top.png (132,8 MB)", 300)}
          <span class="cat">${ic(32, 32, svg`<rect x="1" y="1" width="30" height="30" fill="none" stroke=${L} stroke-width="2"/><path d="M6 8L10 12H14L17 7L18 16Q17 20 12 20T6 16ZM20 14L26 12L27 20L22 24L18 22ZM10 22H16V27H10Z"/>`, "dim")}</span>
        </div>
      </section>

      <section class="side">
        <div class="grip"><i></i><i></i><i></i></div>
        <div class="rcol">
          <div class="tabs">${this.tab(iBrush, true)}${this.tab(iPattern)}<div class="tab">${ic(32, 32, iFont)}</div>${this.tab(iDocs)}<span class="mb">${ic(20, 20, iMenu)}</span></div>
          <div class="inn entry"><span class="ph">${T("Filter", 64)}</span><span class="sp">${chev}</span></div>
          <div class="inn bl"><div class="bg">${brushes.map((b) => this.brush(b))}</div><div class="bs"></div></div>
          <div class="inn entry">${T("Basic,", 68)}<span class="sp">${chev}</span></div>
          <div class="inn rs"><div class="val fill">${T("Abstand", 102)}${T("10,0", 49)}</div><div class="pm">${minus}</div><div class="pm">${plus(false)}</div></div>
          <div class="bot r6">${[iEdit, iNew, iDup, iDelete, iRefresh, iOpen].map((i, k) => html`<span>${ic(32, 32, i, k === 3 || k === 5 ? "dim" : "")}</span>`)}</div>
          <div class="grip h"><i></i><i></i><i></i></div>
          <div class="tabs">${this.tab(iLayers, true)}${this.tab(iChannels)}${this.tab(iPaths)}<span class="mb">${ic(20, 20, iMenu)}</span></div>
          <div class="inn modes"><div class="mb1">${T("Modus", 84)}<span class="sp">${T("Normal", 91)}</span><span style=${styleMap({ marginLeft: "15px" })}>${tri}</span></div><div class="mb2">${ic(32, 32, iReset)}${tri}</div></div>
          <div class="inn rs"><div class="val">${T("Deckkraft", 118)}${T("100,0", 62)}</div><div class="pm">${minus}</div><div class="pm">${plus(true)}</div></div>
          <div class="inn lay">
            <div class="lh"><span>${ic(30, 19, iEye)}</span><span>${ic(24, 26, iLock)}</span><span>${ic(30, 24, svg`<g font-family="Noto Sans" font-weight="700"><text x="2" y="19" font-size="25" font-style="italic">f</text><text x="15" y="22" font-size="22">x</text></g>`)}</span><span class="ls">${ic(32, 32, iSearch)}</span></div>
            <div class="lr">${ic(30, 19, iEye)}<span class="th">${thumb(64, 32)}</span>${T("home-top.png", 176)}</div>
          </div>
          <div class="bot">${[iNew, iGroup, iUp, iDown, iDup, iMerge, iMask, iDelete].map((i, k) => html`<span>${ic(32, 32, i, k === 2 || k === 3 ? "dim" : "")}</span>`)}</div>
        </div>
      </section>
    </div>
    <svg class="cursor" width="28" height="42" viewBox="0 0 28 42"><path d="M2 2V33L9 27L14 38L19 36L14 25H23Z" fill="#2a2a2a" stroke="#fff" stroke-width="2"/></svg>`;
  }
}
